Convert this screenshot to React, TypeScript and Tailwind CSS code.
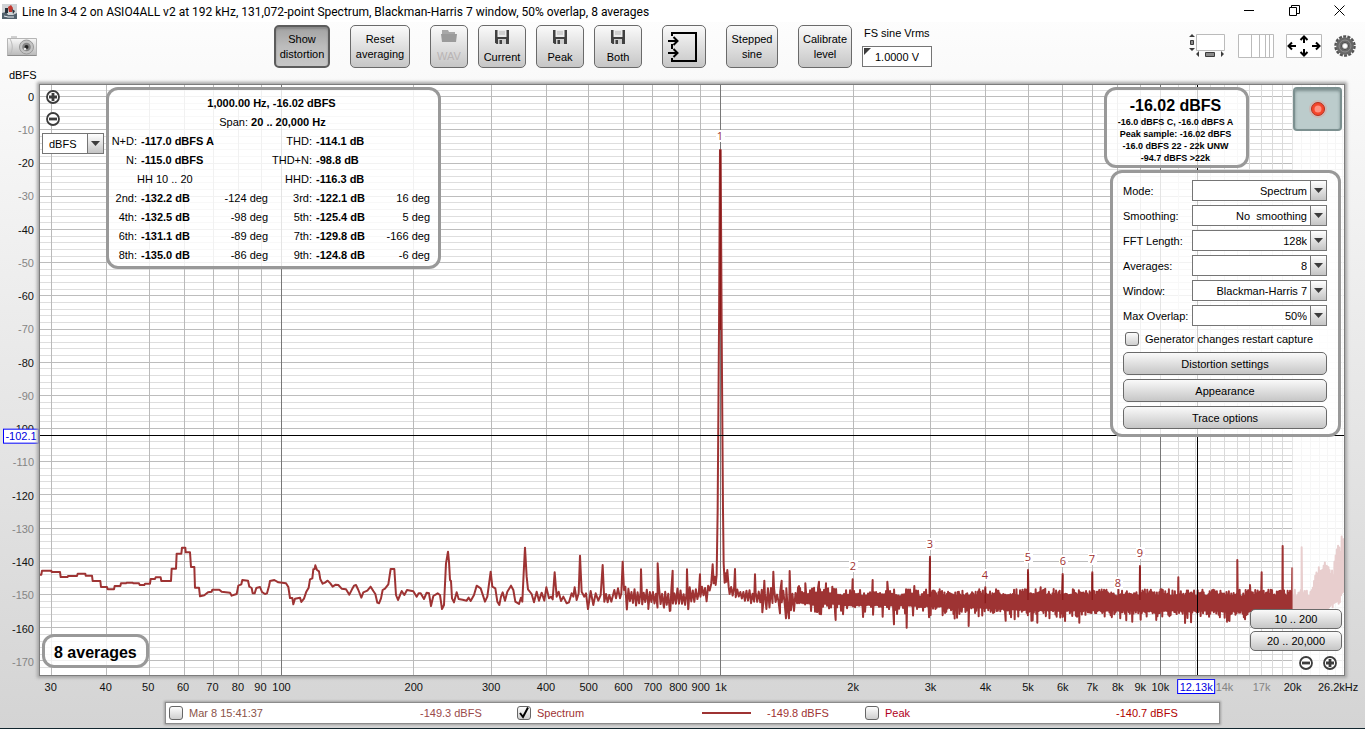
import { useState } from "react";
import type { ReactNode } from "react";

type Point = [number, number];

// Size of the graph that the axis scales are worked out for
const PLOT_W = 1304;
const PLOT_H = 590;

const xPct = (hz: number) => `${((241.5 + 439.4 * Math.log10(hz / 100)) / PLOT_W) * 100}%`;
const yPct = (db: number) => `${((11.7 - db * 3.319) / PLOT_H) * 100}%`;

const lowEnd: Point[] = [
  [27, 134], [34, 134], [36, 122], [64, 122], [65, 126], [90, 126], [92, 141], [113, 141], [114, 138], [141, 138],
  [143, 131], [166, 131], [167, 137], [186, 137], [188, 153], [211, 153], [213, 171], [231, 171], [233, 178], [252, 178],
  [254, 168], [271, 168], [273, 160], [288, 160], [290, 158], [308, 158], [310, 160], [327, 160], [329, 165], [343, 165],
  [345, 161], [360, 161], [362, 147], [375, 147], [377, 142], [392, 142], [394, 153], [423, 153], [425, 116], [438, 116],
  [440, 71], [454, 71], [456, 53], [466, 53], [467, 67], [480, 67], [483, 111], [493, 111], [495, 173], [507, 173],
  [510, 199], [523, 196], [534, 187], [545, 185], [547, 179], [568, 179], [575, 185], [600, 188], [605, 197], [620, 192],
  [625, 167], [634, 163], [637, 150], [654, 152], [658, 170], [665, 174], [668, 190], [674, 190], [679, 174], [690, 171],
  [696, 186], [705, 192], [711, 190], [717, 168], [720, 153], [733, 150], [745, 157], [768, 160], [775, 171], [780, 204],
  [787, 204], [790, 223], [795, 206], [810, 203], [814, 216], [822, 206], [829, 185], [836, 173], [840, 148], [847, 145],
  [850, 118], [854, 117], [856, 106], [861, 120], [867, 124], [871, 148], [878, 161], [885, 158], [893, 152], [901, 160],
  [908, 170], [917, 164], [925, 165], [935, 176], [948, 178], [958, 194], [966, 178], [972, 167], [978, 165], [985, 180],
  [994, 203], [1000, 187], [1012, 182], [1022, 170], [1030, 183], [1036, 192], [1042, 218], [1047, 220], [1053, 205],
  [1058, 180], [1065, 176], [1075, 163], [1082, 117], [1093, 117], [1098, 195], [1104, 210], [1109, 198], [1115, 183],
  [1123, 195], [1131, 180], [1150, 184], [1160, 200], [1166, 190], [1172, 190], [1182, 207], [1190, 188], [1197, 190],
  [1203, 228], [1210, 198], [1223, 190], [1230, 195], [1236, 237], [1242, 225], [1248, 100], [1254, 65], [1257, 95],
  [1260, 150], [1263, 153], [1266, 205], [1272, 217], [1280, 187], [1286, 207], [1298, 209], [1310, 212], [1316, 203],
  [1322, 213], [1332, 195], [1340, 167], [1352, 175], [1365, 215], [1372, 200], [1382, 125], [1387, 170], [1396, 175],
  [1402, 215], [1408, 225], [1413, 200], [1418, 187], [1425, 212], [1432, 185], [1443, 167], [1450, 180], [1456, 215],
  [1467, 222], [1473, 203], [1477, 215], [1481, 130], [1485, 53], [1490, 140], [1494, 178], [1505, 192], [1512, 217],
  [1520, 185], [1527, 212], [1535, 188], [1543, 212], [1549, 172], [1557, 205], [1563, 200], [1568, 208], [1574, 127],
  [1580, 200], [1586, 185], [1593, 213], [1600, 200], [1610, 220], [1617, 217], [1625, 190], [1630, 200], [1634, 172],
  [1640, 210], [1646, 190], [1650, 77], [1655, 185], [1663, 200], [1668, 190], [1674, 237], [1682, 183], [1690, 225],
  [1697, 190], [1705, 212], [1712, 195], [1718, 105], [1723, 215], [1728, 192], [1733, 217], [1738, 195], [1744, 215],
  [1753, 180], [1758, 205], [1764, 175], [1770, 205], [1774, 190], [1778, 95], [1782, 180],
];

// The tone at 1 kHz with its skirts
const tone: Point[] = [
  [2048, 103], [2051, 160], [2054, 140], [2057, 165], [2060, 135], [2063, -60], [2067, -600], [2070, -1140],
  [2072, -1140], [2075, -600], [2079, -60], [2081, 100], [2084, 158], [2087, 130], [2089, 155], [2092, 120], [2096, 170],
];

const spikes: Point[] = [
  [1833, 118], [1883, 100], [1928, 122], [1971, 118], [2010, 133], [2115, 117], [2175, 133], [2203, 152], [2230, 125],
  [2255, 152], [2279, 123], [2307, 168], [2326, 160], [2367, 155], [2388, 160], [2407, 170], [2468, 148], [2528, 150],
  [2572, 155], [2653, 168], [2700, 80], [2866, 172], [2994, 120], [3032, 172], [3098, 132], [3187, 127], [3330, 108],
  [3445, 142], [3622, 90], [3660, 165], [3695, 127], [3758, 48], [3787, 115], [3815, 52],
  [1855, 237], [1902, 233], [1921, 242], [1975, 237],
  [2197, 247], [2250, 250], [2268, 265], [2277, 265], [2369, 252], [2417, 270], [2558, 260], [2592, 283], [2630, 293],
  [2816, 288], [2927, 272], [3022, 278], [3148, 278],
];

// [x, top, bottom] of the noise band
const band: [number, number, number][] = [
  [1786, 170, 224], [1960, 172, 232], [2000, 168, 220], [2046, 152, 188], [2098, 162, 202], [2180, 172, 226],
  [2300, 172, 230], [2500, 176, 236], [2800, 178, 242], [3000, 176, 252], [3789, 179, 254], [3838, 180, 258],
  [3864, 115, 252], [3880, 95, 248], [3896, 98, 240], [3908, 125, 234], [3918, 70, 225], [3922, 30, 218],
  [3930, 60, 210], [3935, 12, 200], [3944, 20, 195],
];

function bandAt(x: number) {
  let i = 0;
  while (i < band.length - 2 && band[i + 1][0] < x) i++;
  const a = band[i];
  const b = band[i + 1];
  const t = Math.min(1, Math.max(0, (x - a[0]) / (b[0] - a[0])));
  return [a[1] + (b[1] - a[1]) * t, a[2] + (b[2] - a[2]) * t];
}

function noise(): Point[] {
  let seed = 7;
  const rnd = () => {
    seed = (seed * 16807) % 2147483647;
    return seed / 2147483647;
  };
  const out: Point[] = [];
  let up = true;
  for (let x = 1786; x < 3944; x += x < 2300 ? 4.6 : x < 2700 ? 3 : 1.8) {
    if (x > 2046 && x < 2097) continue;
    const [top, bottom] = bandAt(x);
    const r = rnd();
    const dip = r * r * 20 + r ** 8 * 18;
    out.push([x, up ? top + r * 22 : bottom - 12 + dip]);
    up = !up;
  }
  return out;
}

const trace = [...lowEnd, ...tone, ...noise(), ...spikes].sort((a, b) => a[0] - b[0]);
const tracePoints = trace.map(([x, y]) => `${x.toFixed(1)},${y.toFixed(1)}`).join(" ");

const harmonics = [
  { n: 1, x: 720, y: 140 },
  { n: 2, x: 853, y: 570 },
  { n: 3, x: 930, y: 548 },
  { n: 4, x: 985, y: 579 },
  { n: 5, x: 1028, y: 561 },
  { n: 6, x: 1063, y: 565 },
  { n: 7, x: 1092, y: 563 },
  { n: 8, x: 1118, y: 587 },
  { n: 9, x: 1140, y: 557 },
];

const majorHz = [
  30, 40, 50, 60, 70, 80, 90, 100, 200, 300, 400, 500, 600, 700, 800, 900,
  1000, 2000, 3000, 4000, 5000, 6000, 7000, 8000, 9000, 10000,
];
const minorHz = Array.from({ length: 16 }, (_, i) => 11000 + i * 1000);
const dbLines = Array.from({ length: 88 }, (_, i) => 2 - i * 2);
const dbTicks = Array.from({ length: 18 }, (_, i) => -i * 10);

const button =
  "rounded-[5px] border border-[#6a6a6a] bg-linear-to-b from-[#fafafa] to-[#c6c6c6] text-center";
const panel = "rounded-xl border-3 border-[#999] bg-white/80";

function Graph() {
  return (
    <svg className="absolute inset-0 h-full w-full" aria-label="Spectrum">
      <g shapeRendering="crispEdges" strokeWidth="1">
        {dbLines.map((db) => (
          <line key={db} x1="0" x2="100%" y1={yPct(db)} y2={yPct(db)} stroke={db % 10 === 0 ? "#bdbdbd" : "#dedede"} />
        ))}
        {minorHz.map((hz) => (
          <line key={hz} x1={xPct(hz)} x2={xPct(hz)} y1="0" y2="100%" stroke="#dadada" />
        ))}
        {majorHz.map((hz) => (
          <line
            key={hz}
            x1={xPct(hz)}
            x2={xPct(hz)}
            y1="0"
            y2="100%"
            stroke={[100, 1000, 10000].includes(hz) ? "#777" : "#bababa"}
          />
        ))}
      </g>
      <svg width="100%" height="100%" viewBox={`0 0 ${PLOT_W} ${PLOT_H}`} preserveAspectRatio="none">
        <g transform="translate(-10 445) scale(0.33333)">
          <polyline points={tracePoints} fill="none" stroke="#9e3333" strokeWidth="6" strokeLinejoin="round" />
          <g stroke="#8b1c1c" strokeWidth="4">
            <path d="M2071-1140V-600M2700 85V200M2994 125V210M3098 135V210M3187 130V210M3330 110V210M2866 175V220" />
          </g>
        </g>
        <g fontFamily="'Open Sans', 'Noto Sans', sans-serif" fontSize="11" textAnchor="middle" fill="#a03030">
          {harmonics.map((h) => (
            <g key={h.n}>
              <rect x={h.x - 44} y={h.y - 95} width="9" height="12" fill="#fff" />
              <text x={h.x - 40} y={h.y - 85}>{h.n}</text>
            </g>
          ))}
        </g>
      </svg>
      <rect x={xPct(20000)} y="0" width="5%" height="100%" fill="#fff" opacity="0.76" />
      <g shapeRendering="crispEdges" stroke="#000">
        <line x1="0" x2="100%" y1={yPct(-102.1)} y2={yPct(-102.1)} />
        <line x1={xPct(12130)} x2={xPct(12130)} y1="0" y2="100%" />
      </g>
    </svg>
  );
}

function LevelAxis() {
  return (
    <svg className="h-full w-[39px] shrink-0 overflow-visible text-[11px]">
      <g textAnchor="end">
        {dbTicks.map((db) => (
          <text key={db} x="34" y={yPct(db)} dy="4" fill={db % 20 === 0 ? "#111" : "#858585"}>
            {db}
          </text>
        ))}
      </g>
      <svg y={yPct(-102.1)} className="overflow-visible">
        <rect x="3.5" y="-7" width="35" height="14" fill="#fff" stroke="#00f" />
        <text x="21" y="4" textAnchor="middle" fill="#0000e0">-102.1</text>
      </svg>
    </svg>
  );
}

const hzLabel = (hz: number) => (hz >= 1000 ? `${hz / 1000}k` : `${hz}`);

function FrequencyAxis() {
  return (
    <svg className="h-[24px] w-full overflow-visible text-[11px]">
      <g textAnchor="middle">
        {majorHz.map((hz) => (
          <text key={hz} x={xPct(hz)} dx={hz < 100 ? -1 : 0} y="15" fill="#111">{hzLabel(hz)}</text>
        ))}
        <text x={xPct(14000)} y="15" fill="#858585">14k</text>
        <text x={xPct(17000)} y="15" fill="#858585">17k</text>
        <text x={xPct(20000)} y="15" fill="#111">20k</text>
        <text x={xPct(26200)} dx="-6" y="15" fill="#111">26.2kHz</text>
      </g>
      <svg x={xPct(12130)} className="overflow-visible">
        <rect x="-19.5" y="3.5" width="37" height="14" fill="#fff" stroke="#00f" />
        <text x="-1" y="15" textAnchor="middle" fill="#0000e0">12.13k</text>
      </svg>
    </svg>
  );
}

function ZoomButton({ plus, label }: { plus?: boolean; label: string }) {
  return (
    <button aria-label={label} className="block size-[14px]">
      <svg viewBox="0 0 14 14" className="size-[14px]" fill="#fff" stroke="#3c3c3c">
        <circle cx="7" cy="7" r="6" strokeWidth="1.8" />
        <path d={plus ? "M3 7h8M7 3v8" : "M3 7h8"} strokeWidth="2.8" />
      </svg>
    </button>
  );
}

function Dropdown({ id, value, className, left }: { id: string; value: string; className: string; left?: boolean }) {
  return (
    <span className={`relative block h-[21px] border border-[#757575] bg-white ${className}`}>
      <select
        id={id}
        aria-label={id}
        className={`block h-full w-full appearance-none pt-px pr-[19px] pl-[6px] ${left ? "" : "[text-align-last:right]"}`}
      >
        <option>{value}</option>
      </select>
      <span className="pointer-events-none absolute inset-y-0 right-0 flex w-[16px] items-center justify-center border-l border-[#757575] bg-linear-to-b from-white to-[#c4c4c4]">
        <svg width="9" height="5" viewBox="0 0 9 5">
          <path d="M0 0h9L4.5 5z" fill="#3c3c3c" />
        </svg>
      </span>
    </span>
  );
}

function Check({ checked, children, className = "" }: { checked?: boolean; children: ReactNode; className?: string }) {
  const [on, setOn] = useState(!!checked);
  return (
    <label className={`flex items-center gap-[6px] leading-[16px] ${className}`}>
      <span className="relative size-[14px]">
        <input
          type="checkbox"
          checked={on}
          onChange={(e) => setOn(e.target.checked)}
          className="block size-[14px] appearance-none rounded-[3px] border border-[#666] bg-linear-to-b from-[#fdfdfd] to-[#cfcfcf]"
        />
        {on && (
          <svg viewBox="0 0 14 14" className="pointer-events-none absolute inset-0 size-[14px]">
            <path d="M3 7l3 4 5-9.5" fill="none" stroke="#000" strokeWidth="2" />
          </svg>
        )}
      </span>
      {children}
    </label>
  );
}

function Floppy() {
  return (
    <svg width="16" height="16" viewBox="0 0 16 16" className="mx-auto">
      <path d="M1 1h14v14H2.500L1 13.500z" fill="#414141" />
      <path d="M3.500 1h9v7h-9z" fill="#ececec" />
      <path d="M5 3h6M5 5h6" stroke="#b5b5b5" />
      <path d="M4 10h8v5H4z" fill="#cfcfcf" />
      <path d="M5.500 11h2.500v4H5.500z" fill="#414141" />
    </svg>
  );
}

function TitleBar() {
  return (
    <header className="flex h-[22px] items-center bg-white pl-[2px] font-[Roboto,'Noto_Sans',sans-serif] text-[12px] whitespace-nowrap">
      <svg width="15" height="15" viewBox="0 0 15 15" className="mr-[5px] shrink-0">
        <path d="M0 0h15v15H0z" fill="#cfd3d6" />
        <path d="M0 9l4-1 2 3h5l4-2v6H0z" fill="#52616d" />
        <path d="M2 12l4 1h6" stroke="#e9eef2" fill="none" />
        <path d="M6 3l3-2 2 3-1 4H7z" fill="#c2372f" />
        <path d="M3 4h3v5H3zM10 5l3 2-2 3z" fill="#28323b" />
      </svg>
      <h1 className="pt-px text-black">
        Line In 3-4 2 on ASIO4ALL v2 at 192 kHz, 131,072-point Spectrum, Blackman-Harris 7 window, 50% overlap, 8 averages
      </h1>
      <div className="mr-[20px] ml-auto flex gap-[34px] pb-[2px]">
        <button aria-label="Minimize">
          <svg width="11" height="11" stroke="#000"><path d="M0 5.500h10" /></svg>
        </button>
        <button aria-label="Restore">
          <svg width="11" height="11" stroke="#000" fill="none"><path d="M.5 2.500h7v8h-7zM2.500 2.500v-2h8v8h-3" /></svg>
        </button>
        <button aria-label="Close">
          <svg width="11" height="11" stroke="#000"><path d="M.5.5l10 10M10.500.5l-10 10" /></svg>
        </button>
      </div>
    </header>
  );
}

function Toolbar() {
  return (
    <div className="flex h-[47px] items-start pt-[3px] pr-[9px] pl-[7px] leading-[15px]">
      <button aria-label="Capture image" className="mt-[10px]">
        <svg width="30" height="22" viewBox="0 0 30 22">
          <defs>
            <linearGradient id="body" x1="0" y1="0" x2="0" y2="1">
              <stop offset="0" stopColor="#f8f8f8" />
              <stop offset="1" stopColor="#b9b9b9" />
            </linearGradient>
          </defs>
          <path d="M4 1h6v3H4z" fill="#d0d0d0" />
          <path d="M.5 3.500h29v17H.5z" fill="url(#body)" stroke="#b5b5b5" />
          <path d="M.5 20.500h29" stroke="#8c8c8c" />
          <path d="M3 4c3 5 3 11 0 16" fill="none" stroke="#bbb" />
          <circle cx="19.500" cy="12" r="7" fill="#c4c4c4" stroke="#999" />
          <circle cx="19.500" cy="12" r="4.300" fill="#858585" />
          <circle cx="19.500" cy="12" r="2" fill="#222" />
          <circle cx="18" cy="14" r="1.300" fill="#e4e4e4" />
        </svg>
      </button>
      <div className="ml-[237px] flex h-[43px] items-stretch">
        <button className="w-[56px] rounded-[5px] border-2 border-[#5c5c5c] bg-linear-to-b from-[#a2a2a2] via-[#bcbcbc] to-[#c6c6c6] text-center shadow-[inset_0_2px_2px_#888]">
          Show distortion
        </button>
        <button className={`${button} ml-[20px] w-[60px]`}>Reset averaging</button>
        <button className={`${button} ml-[20px] w-[38px] text-[#b9b4b4]`}>
          <svg width="16" height="14" viewBox="0 0 16 14" className="mx-auto mb-[6px]">
            <path d="M1 1h6l1 2h6v3H1z" fill="#a8a8a8" />
            <path d="M0 5h16l-1 8H1z" fill="#9b9b9b" />
          </svg>
          WAV
        </button>
        {["Current", "Peak", "Both"].map((name) => (
          <button key={name} className={`${button} ml-[10px] w-[48px]`}>
            <Floppy />
            <span className="mt-[5px] block">{name}</span>
          </button>
        ))}
        <button aria-label="Import" className={`${button} ml-[20px] w-[44px]`}>
          <svg width="32" height="32" viewBox="0 0 32 32" className="mx-auto" fill="none" stroke="#000">
            <path d="M4 5V2h24v28H4v-3M4 13v5" strokeWidth="2" />
            <path d="M0 10h9M5.500 6l4 4-4 4M0 22h9M5.500 18l4 4-4 4" strokeWidth="2" />
          </svg>
        </button>
        <button className={`${button} ml-[20px] w-[52px]`}>Stepped sine</button>
        <button className={`${button} ml-[20px] w-[54px]`}>Calibrate level</button>
        <label className="ml-[10px] block whitespace-nowrap">
          <span className="ml-[2px] block pt-px">FS sine Vrms</span>
          <span className="relative mt-[5px] block">
            <input
              defaultValue="1.0000 V"
              className="block h-[21px] w-[70px] border border-[#757575] bg-white pr-[12px] text-right"
            />
            <svg className="pointer-events-none absolute top-[2px] left-[2px]" width="7" height="7">
              <path d="M0 0h7L0 7z" fill="#3c3c3c" />
            </svg>
          </span>
        </label>
      </div>
      <div className="mt-[8px] ml-auto flex items-start gap-[12px]">
        <button aria-label="Scrollbars">
          <svg width="38" height="25" viewBox="0 0 38 25">
            <path d="M8.500 1.500h28v16h-28z" fill="#fff" stroke="#bbb" />
            <path d="M4 1l3 3H1zM4 18l3-3H1zM8 21l3-3v6zM36 21l-3-3v6z" fill="#3c3c3c" />
            <path d="M2.500 7.500h3v4h-3zM17.500 19.500h9v4h-9z" fill="#8a8a8a" stroke="#3c3c3c" />
          </svg>
        </button>
        <button aria-label="Frequency axis">
          <svg width="36" height="25" viewBox="0 0 36 25">
            <path d="M.5 1.500h35v23H.5z" fill="#fff" />
            <path d="M.5 1.500h35v23H.5zM13.500 1v23M21.500 1v23M27.500 1v23M31.500 1v23" fill="none" stroke="#bbb" />
          </svg>
        </button>
        <button aria-label="Graph limits">
          <svg width="36" height="25" viewBox="0 0 36 25">
            <path d="M.5 1.500h35v23H.5z" fill="#fff" stroke="#bbb" />
            <path
              d="M3 13h7M6 9.500L2.500 13 6 16.500M33 13h-7M30 9.500l3.500 3.500-3.500 3.500M18 4v6M14.500 7L18 3.500 21.500 7M18 22v-6M14.500 19l3.500 3.500 3.500-3.500"
              fill="none"
              stroke="#000"
              strokeWidth="2"
            />
          </svg>
        </button>
        <button aria-label="Settings" className="mt-[2px]">
          <svg width="22" height="22" viewBox="0 0 22 22">
            <circle cx="11" cy="11" r="9.500" fill="none" stroke="#555" strokeWidth="2.500" strokeDasharray="3 1.264" />
            <circle cx="11" cy="11" r="8.800" fill="#686868" />
            <circle cx="11" cy="11" r="6" fill="none" stroke="#8d8d8d" />
            <circle cx="11" cy="11" r="3.500" fill="#ccc" stroke="#444" />
            <circle cx="11" cy="11" r="2" fill="#fff" />
          </svg>
        </button>
      </div>
    </div>
  );
}

const distortion = [
  ["N+D:", "-117.0 dBFS A", "", "THD:", "-114.1 dB", ""],
  ["N:", "-115.0 dBFS", "", "THD+N:", "-98.8 dB", ""],
  ["", "HH 10 .. 20", "", "HHD:", "-116.3 dB", ""],
  ["2nd:", "-132.2 dB", "-124 deg", "3rd:", "-122.1 dB", "16 deg"],
  ["4th:", "-132.5 dB", "-98 deg", "5th:", "-125.4 dB", "5 deg"],
  ["6th:", "-131.1 dB", "-89 deg", "7th:", "-129.8 dB", "-166 deg"],
  ["8th:", "-135.0 dB", "-86 deg", "9th:", "-124.8 dB", "-6 deg"],
];

function DistortionPanel() {
  return (
    <section className={`${panel} absolute top-[2px] left-[66px] w-[335px] pt-[4px] pb-px leading-[19px]`}>
      <p className="pr-[4px] text-center font-bold">1,000.00 Hz, -16.02 dBFS</p>
      <p className="pr-[2px] text-center">
        Span: <b>20 .. 20,000 Hz</b>
      </p>
      <table className="w-[321px] table-fixed whitespace-nowrap">
        <colgroup>
          <col className="w-[28px]" />
          <col className="w-[81px]" />
          <col className="w-[50px]" />
          <col className="w-[44px]" />
          <col className="w-[70px]" />
          <col className="w-[48px]" />
        </colgroup>
        <tbody>
          {distortion.map((r) => (
            <tr key={r[3]} className="text-right">
              <td>
                <span className="float-right">{r[0]}</span>
              </td>
              <td className={`text-left ${r[0] ? "pl-[4px] font-bold" : ""}`}>{r[1]}</td>
              <td>{r[2]}</td>
              <td>
                <span className="float-right">{r[3]}</span>
              </td>
              <td className="pl-[4px] text-left font-bold">{r[4]}</td>
              <td>{r[5]}</td>
            </tr>
          ))}
        </tbody>
      </table>
    </section>
  );
}

const settings = [
  ["Mode:", "Spectrum"],
  ["Smoothing:", "No\u00a0 smoothing"],
  ["FFT Length:", "128k"],
  ["Averages:", "8"],
  ["Window:", "Blackman-Harris 7"],
  ["Max Overlap:", "50%"],
];

function SettingsPanel() {
  return (
    <section className={`${panel} mr-px w-[231px] pt-[7px] pr-[11px] pb-[5px] pl-[10px] whitespace-nowrap`}>
      <div className="flex flex-col gap-[4px]">
        {settings.map(([label, value]) => (
          <div key={label} className="flex items-center justify-between">
            <label htmlFor={label} className="pt-[2px]">{label}</label>
            <Dropdown id={label} value={value} className="w-[135px]" />
          </div>
        ))}
      </div>
      <Check className="mt-[5px] mb-[5px] pl-[2px]">Generator changes restart capture</Check>
      <div className="flex flex-col gap-[4px]">
        {["Distortion settings", "Appearance", "Trace options"].map((name) => (
          <button key={name} className={`${button} h-[23px] pt-px`}>{name}</button>
        ))}
      </div>
    </section>
  );
}

export default function App() {
  return (
    <div className="flex min-h-screen flex-col border-b border-[#12262e] bg-linear-to-b from-[#fefefe] to-[#d4d4d4] font-['Liberation_Sans',Arial,sans-serif] text-[11px] text-black">
      <TitleBar />
      <Toolbar />
      <div className="h-[15px] pl-[9px] leading-[13px]">dBFS</div>

      <main className="flex grow">
        <div className="flex shrink-0 flex-col pt-px">
          <div className="flex grow">
            <LevelAxis />
          </div>
          <div className="h-[26px]" />
        </div>
        <div className="mr-[20px] flex grow flex-col">
          <div className="relative min-h-[540px] grow border border-[#7d7d7d] bg-white shadow-[0_0_3px_2px_#a5a5a5]">
            <Graph />

            <div className="absolute top-[5px] left-[2px]">
              <div className="flex flex-col gap-[8px] pl-[4px]">
                <ZoomButton plus label="Zoom level in" />
                <ZoomButton label="Zoom level out" />
              </div>
              <Dropdown id="Units" value="dBFS" left className="mt-[7px] w-[62px]" />
            </div>

            <DistortionPanel />

            <div className="absolute top-[2px] right-[2px] flex flex-col items-end gap-[2px]">
              <div className="flex items-start gap-[44px]">
                <div className={`${panel} w-[145px] pt-[6px] pr-[2px] pb-px text-center text-[9px] leading-[12px] font-bold whitespace-nowrap`}>
                  <p className="text-[16px] leading-[20px]">-16.02 dBFS</p>
                  <p>-16.0 dBFS C, -16.0 dBFS A</p>
                  <p>Peak sample: -16.02 dBFS</p>
                  <p>-16.0 dBFS 22 - 22k UNW</p>
                  <p>-94.7 dBFS &gt;22k</p>
                </div>
                <button
                  aria-label="Record"
                  className="flex h-[44px] w-[49px] items-center justify-center rounded-[4px] border-2 border-[#7c9090] bg-[#bccccc] shadow-[inset_0_2px_3px_#7d8f8f]"
                >
                  <svg width="22" height="22" viewBox="0 0 22 22">
                    <circle cx="11" cy="11" r="9" fill="#f08a80" opacity="0.3" />
                    <circle cx="11" cy="11" r="6.500" fill="#f4462c" stroke="#b5301f" />
                    <circle cx="11" cy="11" r="3.500" fill="#ff9080" />
                  </svg>
                </button>
              </div>
              <SettingsPanel />
            </div>

            <div className={`${panel} absolute bottom-[7px] left-[2px] px-[9px] pt-[3px] text-[16px] leading-[25px] font-bold`}>
              8 averages
            </div>

            <div className="absolute right-[2px] bottom-[5px] flex w-[92px] flex-col gap-[2px]">
              <button className={`${button} h-[20px]`}>10 .. 200</button>
              <button className={`${button} h-[20px]`}>20 .. 20,000</button>
              <div className="mt-[3px] flex justify-end gap-[10px] pr-[5px]">
                <ZoomButton label="Zoom frequency out" />
                <ZoomButton plus label="Zoom frequency in" />
              </div>
            </div>
          </div>
          <div className="h-[26px] px-px">
            <FrequencyAxis />
          </div>
        </div>
      </main>

      <footer className="mr-[145px] mb-[4px] ml-[165px] flex h-[22px] items-center border border-[#8c8c8c] bg-white pl-[3px] text-[#9e3333] shadow-[0_0_2px_1px_#a0a0a0]">
        <Check className="w-[251px] text-[#8a5348]">Mar 8 15:41:37</Check>
        <span className="w-[97px] text-[#9a4a4a]">-149.3 dBFS</span>
        <Check checked className="w-[185px]">Spectrum</Check>
        <span className="h-[2px] w-[49px] bg-[#9e3333]" />
        <span className="ml-[16px] w-[98px]">-149.8 dBFS</span>
        <Check className="w-[251px] text-[#b00020]">Peak</Check>
        <span className="text-[#b00000]">-140.7 dBFS</span>
      </footer>
    </div>
  );
}
